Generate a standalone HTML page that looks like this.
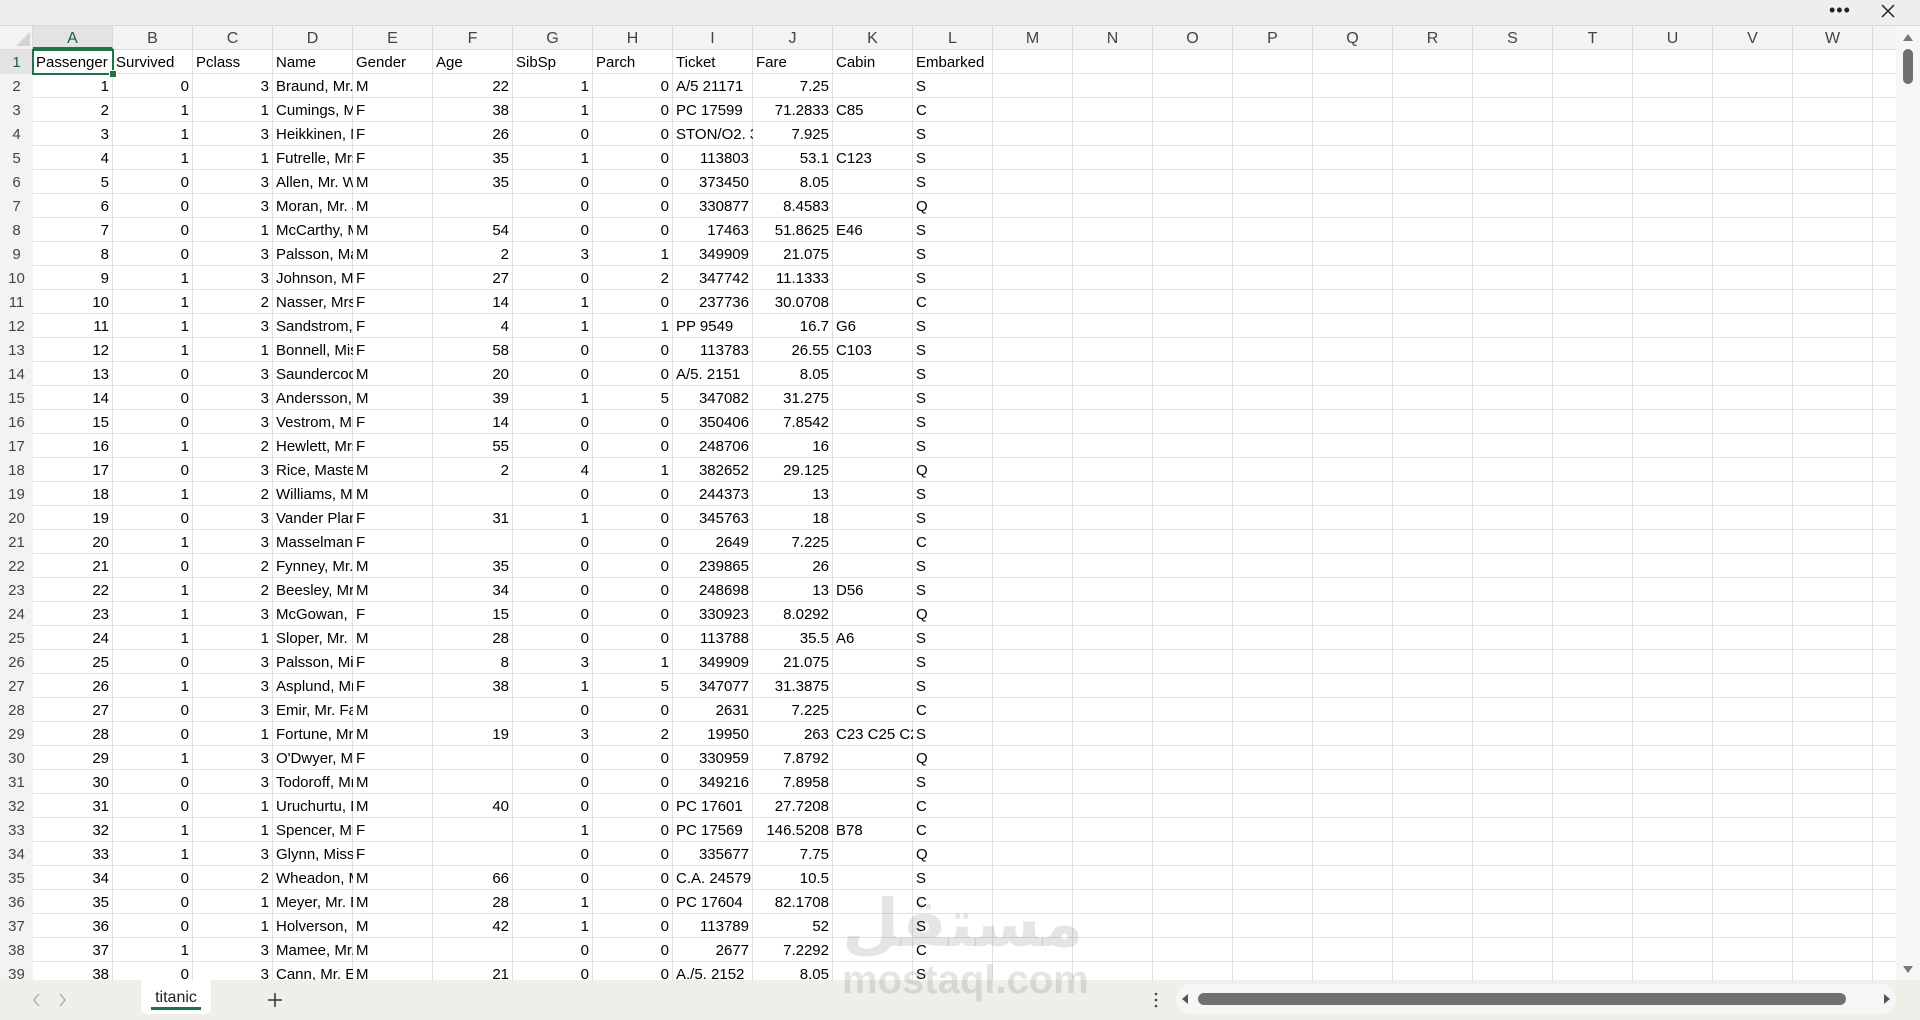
<!DOCTYPE html>
<html><head><meta charset="utf-8">
<style>
*{margin:0;padding:0;box-sizing:border-box}
html,body{width:1920px;height:1020px;overflow:hidden;background:#fff;font-family:"Liberation Sans",sans-serif}
#top{position:absolute;left:0;top:0;width:1920px;height:26px;background:#eeeef1;border-bottom:1px solid #d8d8d8}
#dots{position:absolute;left:1829px;top:0;font-size:18px;letter-spacing:1px;color:#222;line-height:20px}
#x{position:absolute;left:1879px;top:2px}
#ch{position:absolute;left:0;top:26px;height:24px;width:1896px;background:#f3f3f3;border-bottom:1px solid #dadada}
#ch div{position:absolute;top:0;height:23px;width:80px;text-align:center;font-size:16px;line-height:25px;color:#444;border-right:1px solid #dadada}
#grid{position:absolute;left:0;top:50px;width:1896px;height:930px;overflow:hidden;
background:
linear-gradient(#f3f3f3,#f3f3f3) 0 0/33px 100% no-repeat,
repeating-linear-gradient(90deg,transparent 0 32px,#dedede 32px 33px) 0 0/33px 100% no-repeat,
repeating-linear-gradient(180deg,transparent 0 23px,#e1e1e1 23px 24px),
repeating-linear-gradient(90deg,transparent 0 79px,#e1e1e1 79px 80px) 33px 0/1840px 100% no-repeat;}
#rows{display:grid;grid-template-columns:33px repeat(12,80px);grid-auto-rows:24px;font-size:15px;color:#000}
#rows b{font-weight:normal;text-align:center;color:#444;font-size:15px;line-height:26px}
#rows i,#rows u{font-style:normal;text-decoration:none;white-space:nowrap;overflow:hidden;line-height:26px;padding:0 3px}
#rows i{text-align:right;padding-right:4px}
#sel{position:absolute;left:32px;top:49px;width:82px;height:26px;border:2px solid #217346}
#sel:after{content:"";position:absolute;right:-5px;bottom:-5px;width:6px;height:6px;background:#217346;border:1px solid #fff}
#vs{position:absolute;left:1896px;top:26px;width:24px;height:954px;background:#f6f6f6}
#bot{position:absolute;left:0;top:980px;width:1920px;height:40px;background:#f0eee9}
#tab{position:absolute;left:141px;top:0;width:70px;height:34px;background:#fff;border-radius:0 0 6px 6px;font-size:16px;text-align:center;line-height:36px;color:#222}
#tab:after{content:"";position:absolute;left:10px;right:10px;bottom:4px;height:3px;background:#217346}
#hs{position:absolute;left:1176px;top:4px;width:720px;height:30px;background:#f6f6f6;border-radius:15px}
#thumb{position:absolute;left:22px;top:9px;width:648px;height:12px;background:#707070;border-radius:6px}
#wm1{position:absolute;z-index:5;left:842px;top:878px;font-family:"Noto Sans CJK SC","DejaVu Sans",sans-serif;font-size:66px;font-weight:bold;color:rgba(0,0,0,0.1);line-height:80px;direction:rtl}
#wm2{position:absolute;z-index:5;left:842px;top:958px;font-size:40px;font-weight:bold;color:rgba(0,0,0,0.1);line-height:44px}
</style></head><body>
<div id="top"><div id="dots">•••</div>
<svg id="x" width="18" height="18" viewBox="0 0 18 18"><path d="M3 3L15 15M15 3L3 15" stroke="#222" stroke-width="1.5"/></svg></div>
<div id="ch">
<div style="left:0;width:33px;background:#f3f3f3"><svg width="33" height="23"><path d="M30 6L30 20L16 20Z" fill="#d4d4d4"/></svg></div>
<div style="left:33px;background:#e3e3e3;color:#1d5e3a;border-bottom:2px solid #217346">A</div>
<div style="left:113px">B</div><div style="left:193px">C</div><div style="left:273px">D</div><div style="left:353px">E</div><div style="left:433px">F</div><div style="left:513px">G</div><div style="left:593px">H</div><div style="left:673px">I</div><div style="left:753px">J</div><div style="left:833px">K</div><div style="left:913px">L</div><div style="left:993px">M</div><div style="left:1073px">N</div><div style="left:1153px">O</div><div style="left:1233px">P</div><div style="left:1313px">Q</div><div style="left:1393px">R</div><div style="left:1473px">S</div><div style="left:1553px">T</div><div style="left:1633px">U</div><div style="left:1713px">V</div><div style="left:1793px">W</div>
</div>
<div id="grid"><div id="rows">
<b style="background:#e3e3e3;color:#1d5e3a">1</b><u>Passenger</u><u>Survived</u><u>Pclass</u><u>Name</u><u>Gender</u><u>Age</u><u>SibSp</u><u>Parch</u><u>Ticket</u><u>Fare</u><u>Cabin</u><u>Embarked</u>
<b>2</b><i>1</i><i>0</i><i>3</i><u>Braund, Mr. Owen</u><u>M</u><i>22</i><i>1</i><i>0</i><u>A/5 21171</u><i>7.25</i><u></u><u>S</u>
<b>3</b><i>2</i><i>1</i><i>1</i><u>Cumings, Mrs.</u><u>F</u><i>38</i><i>1</i><i>0</i><u>PC 17599</u><i>71.2833</i><u>C85</u><u>C</u>
<b>4</b><i>3</i><i>1</i><i>3</i><u>Heikkinen, Miss</u><u>F</u><i>26</i><i>0</i><i>0</i><u>STON/O2. 3101282</u><i>7.925</i><u></u><u>S</u>
<b>5</b><i>4</i><i>1</i><i>1</i><u>Futrelle, Mrs.</u><u>F</u><i>35</i><i>1</i><i>0</i><i>113803</i><i>53.1</i><u>C123</u><u>S</u>
<b>6</b><i>5</i><i>0</i><i>3</i><u>Allen, Mr. William</u><u>M</u><i>35</i><i>0</i><i>0</i><i>373450</i><i>8.05</i><u></u><u>S</u>
<b>7</b><i>6</i><i>0</i><i>3</i><u>Moran, Mr. James</u><u>M</u><u></u><i>0</i><i>0</i><i>330877</i><i>8.4583</i><u></u><u>Q</u>
<b>8</b><i>7</i><i>0</i><i>1</i><u>McCarthy, Mr.</u><u>M</u><i>54</i><i>0</i><i>0</i><i>17463</i><i>51.8625</i><u>E46</u><u>S</u>
<b>9</b><i>8</i><i>0</i><i>3</i><u>Palsson, Master</u><u>M</u><i>2</i><i>3</i><i>1</i><i>349909</i><i>21.075</i><u></u><u>S</u>
<b>10</b><i>9</i><i>1</i><i>3</i><u>Johnson, Mrs.</u><u>F</u><i>27</i><i>0</i><i>2</i><i>347742</i><i>11.1333</i><u></u><u>S</u>
<b>11</b><i>10</i><i>1</i><i>2</i><u>Nasser, Mrs.</u><u>F</u><i>14</i><i>1</i><i>0</i><i>237736</i><i>30.0708</i><u></u><u>C</u>
<b>12</b><i>11</i><i>1</i><i>3</i><u>Sandstrom, Miss</u><u>F</u><i>4</i><i>1</i><i>1</i><u>PP 9549</u><i>16.7</i><u>G6</u><u>S</u>
<b>13</b><i>12</i><i>1</i><i>1</i><u>Bonnell, Miss</u><u>F</u><i>58</i><i>0</i><i>0</i><i>113783</i><i>26.55</i><u>C103</u><u>S</u>
<b>14</b><i>13</i><i>0</i><i>3</i><u>Saundercock, Mr.</u><u>M</u><i>20</i><i>0</i><i>0</i><u>A/5. 2151</u><i>8.05</i><u></u><u>S</u>
<b>15</b><i>14</i><i>0</i><i>3</i><u>Andersson, Mr.</u><u>M</u><i>39</i><i>1</i><i>5</i><i>347082</i><i>31.275</i><u></u><u>S</u>
<b>16</b><i>15</i><i>0</i><i>3</i><u>Vestrom, Miss</u><u>F</u><i>14</i><i>0</i><i>0</i><i>350406</i><i>7.8542</i><u></u><u>S</u>
<b>17</b><i>16</i><i>1</i><i>2</i><u>Hewlett, Mrs.</u><u>F</u><i>55</i><i>0</i><i>0</i><i>248706</i><i>16</i><u></u><u>S</u>
<b>18</b><i>17</i><i>0</i><i>3</i><u>Rice, Master</u><u>M</u><i>2</i><i>4</i><i>1</i><i>382652</i><i>29.125</i><u></u><u>Q</u>
<b>19</b><i>18</i><i>1</i><i>2</i><u>Williams, Mr.</u><u>M</u><u></u><i>0</i><i>0</i><i>244373</i><i>13</i><u></u><u>S</u>
<b>20</b><i>19</i><i>0</i><i>3</i><u>Vander Planke</u><u>F</u><i>31</i><i>1</i><i>0</i><i>345763</i><i>18</i><u></u><u>S</u>
<b>21</b><i>20</i><i>1</i><i>3</i><u>Masselmani, Mrs.</u><u>F</u><u></u><i>0</i><i>0</i><i>2649</i><i>7.225</i><u></u><u>C</u>
<b>22</b><i>21</i><i>0</i><i>2</i><u>Fynney, Mr.</u><u>M</u><i>35</i><i>0</i><i>0</i><i>239865</i><i>26</i><u></u><u>S</u>
<b>23</b><i>22</i><i>1</i><i>2</i><u>Beesley, Mr.</u><u>M</u><i>34</i><i>0</i><i>0</i><i>248698</i><i>13</i><u>D56</u><u>S</u>
<b>24</b><i>23</i><i>1</i><i>3</i><u>McGowan, Miss</u><u>F</u><i>15</i><i>0</i><i>0</i><i>330923</i><i>8.0292</i><u></u><u>Q</u>
<b>25</b><i>24</i><i>1</i><i>1</i><u>Sloper, Mr.</u><u>M</u><i>28</i><i>0</i><i>0</i><i>113788</i><i>35.5</i><u>A6</u><u>S</u>
<b>26</b><i>25</i><i>0</i><i>3</i><u>Palsson, Miss</u><u>F</u><i>8</i><i>3</i><i>1</i><i>349909</i><i>21.075</i><u></u><u>S</u>
<b>27</b><i>26</i><i>1</i><i>3</i><u>Asplund, Mrs.</u><u>F</u><i>38</i><i>1</i><i>5</i><i>347077</i><i>31.3875</i><u></u><u>S</u>
<b>28</b><i>27</i><i>0</i><i>3</i><u>Emir, Mr. Farred</u><u>M</u><u></u><i>0</i><i>0</i><i>2631</i><i>7.225</i><u></u><u>C</u>
<b>29</b><i>28</i><i>0</i><i>1</i><u>Fortune, Mr.</u><u>M</u><i>19</i><i>3</i><i>2</i><i>19950</i><i>263</i><u>C23 C25 C27</u><u>S</u>
<b>30</b><i>29</i><i>1</i><i>3</i><u>O'Dwyer, Miss</u><u>F</u><u></u><i>0</i><i>0</i><i>330959</i><i>7.8792</i><u></u><u>Q</u>
<b>31</b><i>30</i><i>0</i><i>3</i><u>Todoroff, Mr.</u><u>M</u><u></u><i>0</i><i>0</i><i>349216</i><i>7.8958</i><u></u><u>S</u>
<b>32</b><i>31</i><i>0</i><i>1</i><u>Uruchurtu, Don.</u><u>M</u><i>40</i><i>0</i><i>0</i><u>PC 17601</u><i>27.7208</i><u></u><u>C</u>
<b>33</b><i>32</i><i>1</i><i>1</i><u>Spencer, Mrs.</u><u>F</u><u></u><i>1</i><i>0</i><u>PC 17569</u><i>146.5208</i><u>B78</u><u>C</u>
<b>34</b><i>33</i><i>1</i><i>3</i><u>Glynn, Miss</u><u>F</u><u></u><i>0</i><i>0</i><i>335677</i><i>7.75</i><u></u><u>Q</u>
<b>35</b><i>34</i><i>0</i><i>2</i><u>Wheadon, Mr.</u><u>M</u><i>66</i><i>0</i><i>0</i><u>C.A. 24579</u><i>10.5</i><u></u><u>S</u>
<b>36</b><i>35</i><i>0</i><i>1</i><u>Meyer, Mr. Edgar</u><u>M</u><i>28</i><i>1</i><i>0</i><u>PC 17604</u><i>82.1708</i><u></u><u>C</u>
<b>37</b><i>36</i><i>0</i><i>1</i><u>Holverson, Mr.</u><u>M</u><i>42</i><i>1</i><i>0</i><i>113789</i><i>52</i><u></u><u>S</u>
<b>38</b><i>37</i><i>1</i><i>3</i><u>Mamee, Mr.</u><u>M</u><u></u><i>0</i><i>0</i><i>2677</i><i>7.2292</i><u></u><u>C</u>
<b>39</b><i>38</i><i>0</i><i>3</i><u>Cann, Mr. Ernest</u><u>M</u><i>21</i><i>0</i><i>0</i><u>A./5. 2152</u><i>8.05</i><u></u><u>S</u>
</div></div>
<div id="sel"></div>
<div id="vs">
<svg width="24" height="954" style="position:absolute;left:0;top:0"><path d="M7 15L17 15L12 8Z" fill="#777"/><rect x="7" y="23" width="10" height="35" rx="5" fill="#707070"/><path d="M7 940L17 940L12 947Z" fill="#777"/></svg>
</div>
<div id="bot">
<svg width="100" height="40" style="position:absolute;left:20px;top:0"><path d="M19 14L14 20L19 26M40 14L45 20L40 26" stroke="#aaa" stroke-width="1.3" fill="none"/></svg>
<div id="tab">titanic</div>
<svg width="20" height="20" style="position:absolute;left:265px;top:10px"><path d="M10 3V17M3 10H17" stroke="#333" stroke-width="1.5"/></svg>
<svg width="6" height="20" style="position:absolute;left:1153px;top:11px"><circle cx="3" cy="3" r="1.3" fill="#444"/><circle cx="3" cy="9" r="1.3" fill="#444"/><circle cx="3" cy="15" r="1.3" fill="#444"/></svg>
<div id="hs"><svg width="720" height="30" style="position:absolute;left:0;top:0"><path d="M12 10L12 20L6 15Z" fill="#555"/><path d="M708 10L708 20L714 15Z" fill="#555"/></svg><div id="thumb"></div></div>
</div>
<div id="wm1">مستقل</div>
<div id="wm2">mostaql.com</div>
</body></html>
